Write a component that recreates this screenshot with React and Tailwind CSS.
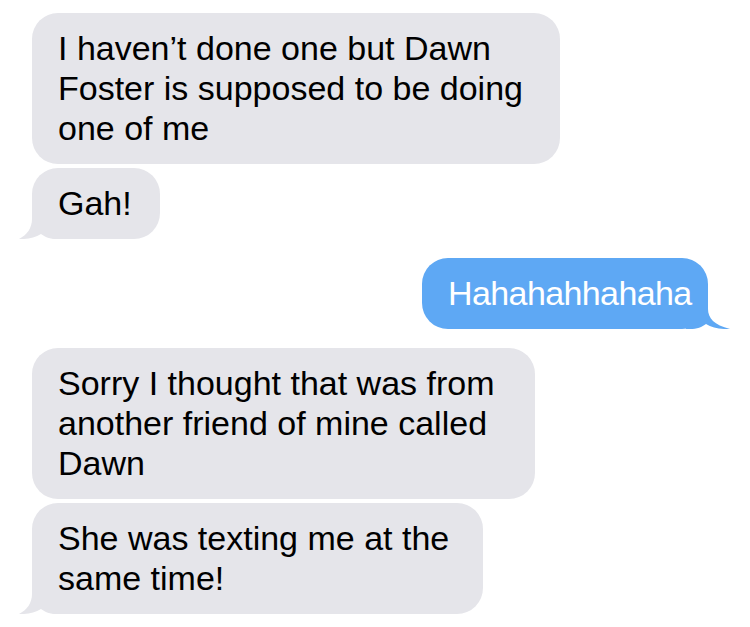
import React from "react";

function LeftTail() {
  return (
    <svg
      className="absolute left-[-13px] bottom-0"
      width="44"
      height="32"
      viewBox="0 0 44 32"
    >
      <path
        d="M13 0 V12 C13 21 8 28 0 32 C8 32.5 16 30.5 22 27 C26 30 31 32 38 32 H44 V0 Z"
        fill="#e5e5ea"
      />
    </svg>
  );
}

function RightTail() {
  return (
    <svg
      className="absolute right-[-22px] bottom-0"
      width="44"
      height="32"
      viewBox="0 0 44 32"
    >
      <path
        d="M22 0 V12 C22 21 28 28 44 32 C34 32.5 26 30.5 20 27 C16 30 11 32 4 32 H0 V0 Z"
        fill="#5ea8f4"
      />
    </svg>
  );
}

function Gray({ w, children, tail }) {
  return (
    <div
      className={`relative rounded-[26px] bg-[#e5e5ea] pl-[26px] pt-[15px] pb-[16px] text-[34px] leading-[40px] text-black whitespace-nowrap ${w}`}
    >
      {tail && <LeftTail />}
      <span className="relative">{children}</span>
    </div>
  );
}

export default function App() {
  return (
    <div
      className="w-[750px] h-[627px] bg-white overflow-hidden flex flex-col pt-[13px]"
      style={{ fontFamily: '"Liberation Sans", Arial, sans-serif' }}
    >
      <div className="ml-[32px] flex flex-col gap-[4px]">
        <Gray w="w-[528px]">
          I haven’t done one but Dawn
          <br />
          Foster is supposed to be doing
          <br />
          one of me
        </Gray>
        <Gray w="w-[128px]" tail>
          Gah!
        </Gray>
      </div>

      <div className="mt-[19px] flex justify-end pr-[42px]">
        <div className="relative w-[286px] rounded-[26px] bg-[#5ea8f4] pl-[26px] pt-[15px] pb-[16px] text-[34px] leading-[40px] tracking-[-0.6px] text-white whitespace-nowrap">
          <RightTail />
          <span className="relative">Hahahahhahaha</span>
        </div>
      </div>

      <div className="mt-[19px] ml-[32px] flex flex-col gap-[4px]">
        <Gray w="w-[503px]">
          Sorry I thought that was from
          <br />
          another friend of mine called
          <br />
          Dawn
        </Gray>
        <Gray w="w-[451px]" tail>
          She was texting me at the
          <br />
          same time!
        </Gray>
      </div>
    </div>
  );
}
